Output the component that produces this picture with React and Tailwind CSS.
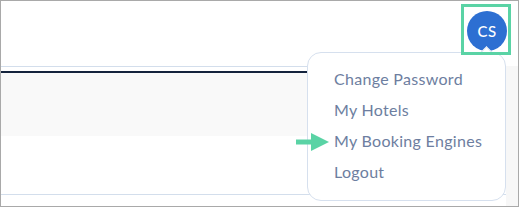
import React from "react";

export default function App() {
  const items = ["Change Password", "My Hotels", "My Booking Engines", "Logout"];
  return (
    <div
      className="relative w-[519px] h-[207px] overflow-hidden border border-[#a9a9a9] bg-white flex flex-col"
      style={{ fontFamily: "Lato, 'Open Sans', sans-serif" }}
    >
      {/* header */}
      <div className="h-[65px] shrink-0 flex justify-end items-start pr-[11px] pt-[10px]">
        <div className="w-[40px] h-[40px] rounded-full bg-[#2d6fd2] flex items-center justify-center text-white text-[15px] font-medium tracking-[0.5px]">
          CS
        </div>
      </div>
      {/* body */}
      <div className="flex-1 flex">
        <div className="flex-1 flex flex-col">
          <div className="h-[1px] bg-[#d3deec]" />
          <div className="h-[4px]" />
          <div className="h-[2px] bg-[#14233d]" />
          <div className="h-[63px] bg-[#f9f9f9]" />
          <div className="h-[58px]" />
          <div className="h-[1px] bg-[#d3deec]" />
          <div className="flex-1" />
        </div>
        <div className="w-[12px] bg-[#f7f7f7]" />
      </div>

      {/* dropdown menu */}
      <div className="absolute left-[306px] top-[51px] w-[199px] h-[149px] rounded-[14px] border border-[#d6e0ee] bg-white">
        <div className="absolute right-[14px] top-[-5px] w-[9px] h-[9px] rotate-45 bg-white border-l border-t border-[#d6e0ee]" />
        <div className="flex flex-col pl-[26px] pt-[10px]">
          {items.map((t) => (
            <div key={t} className="h-[31px] leading-[31px] text-[16px] text-[#6d7ea0] tracking-[0.3px]">
              {t}
            </div>
          ))}
        </div>
      </div>

      {/* annotation box */}
      <div className="absolute left-[460px] top-[3px] w-[50px] h-[51px] border-[3px] border-[#5ad3a5]" />

      {/* annotation arrow */}
      <svg className="absolute left-[295px] top-[132px]" width="33" height="18" viewBox="0 0 33 18">
        <rect x="0" y="6.5" width="16" height="5" fill="#5ad3a5" />
        <polygon points="15,0 33,9 15,18" fill="#5ad3a5" />
      </svg>
    </div>
  );
}
